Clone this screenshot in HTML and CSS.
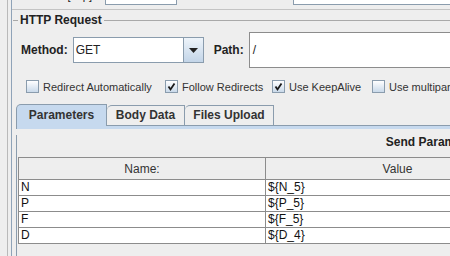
FILE: index.html
```html
<!DOCTYPE html>
<html lang="en">
<head>
  <meta charset="UTF-8" />
  <title>HTTP Request</title>
  <link rel="stylesheet" href="styles.css">
</head>
<body>
  <div class="shell">
    <div class="rail"></div>
    <div class="sampler">

      <div class="top-row">
        <span class="top-label">Protocol [http]:</span>
        <span class="field short"></span>
        <span class="field long"></span>
      </div>

      <div class="titled">
        <div class="titled-head"><span>HTTP Request</span></div>

        <div class="method-row">
          <label class="lbl">Method:</label>
          <div class="combo">
            <span class="combo-text">GET</span>
            <span class="combo-btn">
              <svg width="9" height="5" viewBox="0 0 9 5"><polygon points="0,0 9,0 4.5,5" fill="#222"/></svg>
            </span>
          </div>
          <label class="lbl path-lbl">Path:</label>
          <div class="path-field">/</div>
        </div>

        <div class="options">
          <span class="opt o1"><span class="box"></span>Redirect Automatically</span>
          <span class="opt o2"><span class="box"><svg width="11" height="11" viewBox="0 0 11 11"><path d="M2.5 5.5 L4.5 8.5 L8.5 2.5" fill="none" stroke="#1a1a1a" stroke-width="1.8"/></svg></span>Follow Redirects</span>
          <span class="opt o3"><span class="box"><svg width="11" height="11" viewBox="0 0 11 11"><path d="M2.5 5.5 L4.5 8.5 L8.5 2.5" fill="none" stroke="#1a1a1a" stroke-width="1.8"/></svg></span>Use KeepAlive</span>
          <span class="opt"><span class="box"></span>Use multipart/form-data for POST</span>
        </div>

        <div class="tabbed">
          <div class="tab-strip">
            <span class="tab active">Parameters</span>
            <span class="tab t-body">Body Data</span>
            <span class="tab t-files">Files Upload</span>
          </div>
          <div class="tab-band"></div>
          <div class="tab-panel">
            <div class="panel-title">Send Parameters With the Request:</div>
            <table class="params">
              <colgroup>
                <col class="c-name"><col class="c-value"><col class="c-enc"><col class="c-eq">
              </colgroup>
              <thead>
                <tr><th>Name:</th><th>Value</th><th>Encode?</th><th>Include Equals?</th></tr>
              </thead>
              <tbody>
                <tr><td>N</td><td>${N_5}</td><td></td><td></td></tr>
                <tr><td>P</td><td>${P_5}</td><td></td><td></td></tr>
                <tr><td>F</td><td>${F_5}</td><td></td><td></td></tr>
                <tr><td>D</td><td>${D_4}</td><td></td><td></td></tr>
              </tbody>
            </table>
          </div>
        </div>
      </div>

    </div>
  </div>
</body>
</html>
```

FILE: styles.css
```css
html, body {
  margin: 0;
  height: 256px;
  overflow: hidden;
}
body {
  background: #eeeeee;
  font-family: 'Liberation Sans', Arial, sans-serif;
  color: #222;
  width: 450px;
}
.shell {
  display: flex;
  height: 256px;
}
.rail {
  flex: none;
  width: 3px;
  margin-left: 7px;
  border-left: 1px solid #b9b9b9;
  border-right: 1px solid #8fa3b8;
}
.sampler {
  flex: none;
  width: 960px;
}

/* cut-off row at the very top */
.top-row {
  display: flex;
  align-items: center;
  height: 18px;
  margin-top: -13px;
  padding-bottom: 4px;
  border-bottom: 1px solid #c4c4c4;
  font-size: 11px;
}
.top-label {
  width: 83px;
  text-align: right;
}
.field {
  display: block;
  height: 16px;
  background: white;
  border: 1px solid #8a9cad;
  margin-left: 10px;
}
.field.short { width: 70px; }
.field.long { width: 500px; margin-left: 116px; }

/* titled border */
.titled-head {
  display: flex;
  align-items: center;
  height: 14px;
  margin-top: 3px;
  font-size: 12px;
  font-weight: bold;
}
.titled-head::before {
  content: '';
  width: 5px;
  margin-left: 1px;
  border-top: 1px solid #a9a9a9;
}
.titled-head span {
  padding: 0 2px;
}
.titled-head::after {
  content: '';
  flex: 1;
  border-top: 1px solid #a9a9a9;
}

.method-row {
  display: flex;
  align-items: center;
  height: 36px;
  margin-top: 5px;
  padding-left: 9px;
  font-size: 12px;
}
.lbl {
  font-weight: bold;
  margin-right: 5px;
}
.combo {
  display: flex;
  width: 129px;
  height: 24px;
  background: white;
  border: 1px solid #8a9cad;
}
.combo-text {
  flex: 1;
  padding-left: 2px;
  line-height: 24px;
}
.combo-btn {
  display: flex;
  align-items: center;
  justify-content: center;
  width: 19px;
  border-left: 1px solid #8a9cad;
  background: linear-gradient(#eef4fa, #c3d5e8);
}
.path-lbl {
  margin-left: 10px;
}
.path-field {
  width: 600px;
  height: 34px;
  line-height: 34px;
  padding-left: 3px;
  background: white;
  border: 1px solid #8c8c8c;
}

/* checkboxes */
.options {
  display: flex;
  align-items: center;
  height: 13px;
  margin-top: 12px;
  padding-left: 14px;
  font-size: 11px;
  color: #333;
  white-space: nowrap;
}
.opt {
  display: flex;
  align-items: center;
  flex: none;
}
.o1 { width: 139px; }
.o2 { width: 107px; }
.o3 { width: 100px; }
.box {
  display: flex;
  align-items: center;
  justify-content: center;
  width: 11px;
  height: 11px;
  margin-right: 4px;
  border: 1px solid #8a9cad;
  background: linear-gradient(#ffffff, #c9d9ea);
}

/* tabs */
.tabbed {
  margin-top: 11px;
  margin-left: 4px;
}
.tab-strip {
  display: flex;
  align-items: flex-end;
  height: 21px;
  border-bottom: 1px solid #8a9cad;
}
.tab {
  box-sizing: border-box;
  height: 20px;
  line-height: 19px;
  text-align: center;
  font-size: 12px;
  font-weight: bold;
  color: #333;
  border: 1px solid #8a9cad;
  border-bottom: none;
  border-left: none;
  border-top-left-radius: 5px;
  background: #eeeeee;
}
.tab.active {
  width: 91px;
  height: 22px;
  margin-bottom: -1px;
  line-height: 20px;
  border-left: 1px solid #8a9cad;
  background: #c6d9ee;
}
.t-body { width: 78px; }
.t-files { width: 89px; }
.tab-band {
  height: 3px;
  background: #c6d9ee;
  border-left: 1px solid #8a9cad;
}
.tab-panel {
  width: 941px;
  height: 140px;
  border-left: 1px solid #8a9cad;
}
.panel-title {
  margin-top: 6px;
  height: 14px;
  line-height: 14px;
  text-align: center;
  font-size: 12px;
  font-weight: bold;
}
.params {
  margin-top: 8px;
  margin-left: 1px;
  border-collapse: collapse;
  table-layout: fixed;
  width: 900px;
  font-size: 12px;
}
.c-name { width: 247px; }
.c-value { width: 264px; }
.params th {
  height: 21px;
  padding: 0;
  font-weight: normal;
  color: #333;
  background: #eeeeee;
  border: 1px solid #8c8c8c;
  overflow: hidden;
  white-space: nowrap;
}
.params td {
  height: 15px;
  padding: 0 2px;
  line-height: 15px;
  color: #111;
  background: white;
  border: 1px solid #8c8c8c;
}
```
